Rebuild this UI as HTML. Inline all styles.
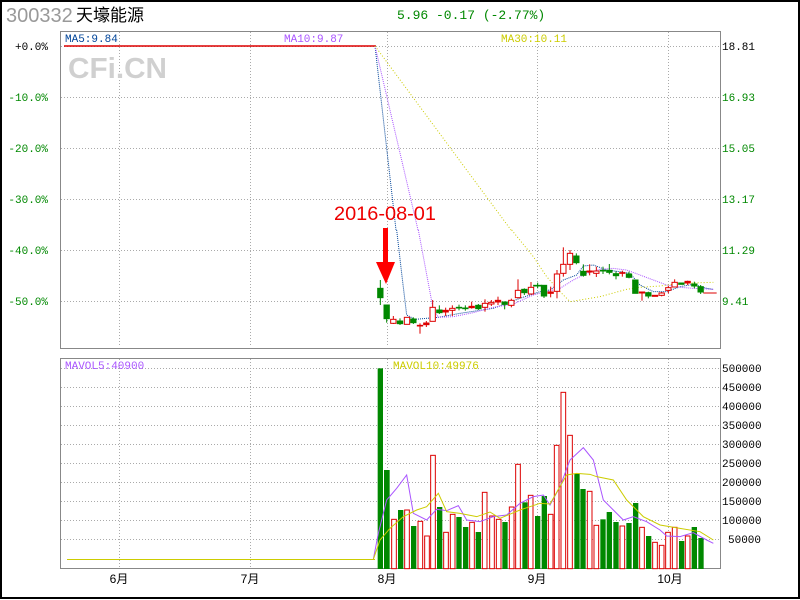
<!DOCTYPE html>
<html><head><meta charset="utf-8"><style>
html,body{margin:0;padding:0;background:#fff}
svg{display:block}
</style></head><body>
<svg width="800" height="600" viewBox="0 0 800 600" xmlns="http://www.w3.org/2000/svg" font-family="Liberation Mono, monospace">
<rect x="0" y="0" width="800" height="600" fill="#fff"/>
<rect x="1" y="1" width="798" height="597" fill="none" stroke="#000" stroke-width="2"/>
<text x="6" y="22" font-family="Liberation Sans, sans-serif" font-size="20" fill="#999">300332</text>
<text x="76" y="21" font-family="Liberation Sans, 'Noto Sans CJK SC', sans-serif" font-size="17" fill="#000">天壕能源</text>
<text x="397" y="19" font-size="13" fill="#008800">5.96 -0.17 (-2.77%)</text>
<g stroke="#aaa" stroke-width="1" stroke-dasharray="1,2">
<line x1="61" y1="46.5" x2="719" y2="46.5"/><line x1="61" y1="97.5" x2="719" y2="97.5"/><line x1="61" y1="148.5" x2="719" y2="148.5"/><line x1="61" y1="199.5" x2="719" y2="199.5"/><line x1="61" y1="250.5" x2="719" y2="250.5"/><line x1="61" y1="301.5" x2="719" y2="301.5"/>
<line x1="119.5" y1="32" x2="119.5" y2="347"/><line x1="250.5" y1="32" x2="250.5" y2="347"/><line x1="387.5" y1="32" x2="387.5" y2="347"/><line x1="537.5" y1="32" x2="537.5" y2="347"/><line x1="668.5" y1="32" x2="668.5" y2="347"/>
<line x1="61" y1="368.5" x2="719" y2="368.5"/><line x1="61" y1="387.5" x2="719" y2="387.5"/><line x1="61" y1="406.5" x2="719" y2="406.5"/><line x1="61" y1="425.5" x2="719" y2="425.5"/><line x1="61" y1="444.5" x2="719" y2="444.5"/><line x1="61" y1="463.5" x2="719" y2="463.5"/><line x1="61" y1="482.5" x2="719" y2="482.5"/><line x1="61" y1="501.5" x2="719" y2="501.5"/><line x1="61" y1="520.5" x2="719" y2="520.5"/><line x1="61" y1="539.5" x2="719" y2="539.5"/>
<line x1="119.5" y1="359" x2="119.5" y2="568"/><line x1="250.5" y1="359" x2="250.5" y2="568"/><line x1="387.5" y1="359" x2="387.5" y2="568"/><line x1="537.5" y1="359" x2="537.5" y2="568"/><line x1="668.5" y1="359" x2="668.5" y2="568"/>
</g>
<rect x="60.5" y="31.5" width="660" height="317" fill="none" stroke="#888" stroke-width="1"/>
<rect x="60.5" y="358.5" width="660" height="210" fill="none" stroke="#888" stroke-width="1"/>
<text x="68" y="78" font-family="Liberation Sans, sans-serif" font-weight="bold" font-size="29" fill="#d0d0d0" textLength="99" lengthAdjust="spacingAndGlyphs">CFi.CN</text>
<g font-size="11">
<text x="65" y="42" fill="#004499">MA5:9.84</text>
<text x="284" y="42" fill="#aa55ff">MA10:9.87</text>
<text x="501" y="42" fill="#cccc00">MA30:10.11</text>
<text x="65" y="369" fill="#aa55ff">MAVOL5:40900</text>
<text x="393" y="369" fill="#cccc00">MAVOL10:49976</text>
</g>
<g font-size="11" text-anchor="end">
<text x="48" y="50" fill="#000">+0.0%</text>
<text x="48" y="101" fill="#008800">-10.0%</text>
<text x="48" y="152" fill="#008800">-20.0%</text>
<text x="48" y="203" fill="#008800">-30.0%</text>
<text x="48" y="254" fill="#008800">-40.0%</text>
<text x="48" y="305" fill="#008800">-50.0%</text>
</g>
<g font-size="11">
<text x="722" y="50" fill="#000">18.81</text>
<text x="722" y="101" fill="#008800">16.93</text>
<text x="722" y="152" fill="#008800">15.05</text>
<text x="722" y="203" fill="#008800">13.17</text>
<text x="722" y="254" fill="#008800">11.29</text>
<text x="722" y="305" fill="#008800">9.41</text>
<text x="722" y="372">500000</text><text x="722" y="391">450000</text><text x="722" y="410">400000</text><text x="722" y="429">350000</text><text x="722" y="448">300000</text><text x="722" y="467">250000</text><text x="722" y="486">200000</text><text x="722" y="505">150000</text><text x="722" y="524">100000</text><text x="728" y="543">50000</text>
</g>
<g font-family="Liberation Sans, 'Noto Sans CJK SC', sans-serif" font-size="12" fill="#000" text-anchor="middle">
<text x="119" y="583">6月</text><text x="250" y="583">7月</text><text x="387" y="583">8月</text><text x="537" y="583">9月</text><text x="670" y="583">10月</text>
</g>
<line x1="64" y1="46" x2="376" y2="46" stroke="#dd0000" stroke-width="1.5"/>
<line x1="67" y1="559.5" x2="375" y2="559.5" stroke="#cccc00" stroke-width="1"/>
<line x1="375" y1="46" x2="396" y2="230" stroke="#004499" stroke-dasharray="1,1"/>
<line x1="375" y1="46" x2="418" y2="230" stroke="#aa55ff" stroke-dasharray="1,1"/>
<line x1="375" y1="46" x2="511" y2="230" stroke="#cccc00" stroke-dasharray="1,2"/>
<text x="334" y="220" font-family="Liberation Sans, sans-serif" font-size="19" fill="#ee0000" textLength="102" lengthAdjust="spacingAndGlyphs">2016-08-01</text>
<rect x="383" y="228" width="5" height="36" fill="#ff0000"/>
<polygon points="376,262 395,262 386,284" fill="#ff0000"/>
<g transform="translate(360,230) scale(0.33333)" stroke-width="3">
<g fill="none" stroke-dasharray="3,3" stroke-width="3">
<polyline stroke="#004499" points="110,0 125,130 140,255 165,268 235,262 300,250 400,235 480,205 540,185 570,180 610,150 650,135 670,108 700,105 740,120 780,125 810,130 840,165 880,185 920,185 960,170 1000,163 1040,175 1060,178"/>
<polyline stroke="#aa55ff" points="175,0 220,240 235,262 280,260 340,248 400,232 460,222 520,195 560,185 600,175 640,150 680,130 720,118 760,115 800,120 840,135 880,150 920,165 960,172 1000,175 1060,178"/>
<polyline stroke="#cccc00" stroke-dasharray="3,6" points="455,0 520,80 560,140 600,185 630,215 660,210 720,200 800,178 840,172 900,168 960,160 1060,157"/>
</g>
<line x1="1030" y1="189" x2="1070" y2="189" stroke="#dd0000"/>
<g stroke="#008800" fill="#008800">
<line x1="61" y1="150" x2="61" y2="225"/><rect x="53" y="175" width="16" height="28"/>
<line x1="80" y1="225" x2="80" y2="278"/><rect x="72" y="225" width="16" height="41"/>
<line x1="120" y1="265" x2="120" y2="285"/><rect x="112" y="273" width="16" height="8"/>
<line x1="160" y1="262" x2="160" y2="282"/><rect x="152" y="267" width="16" height="11"/>
<line x1="238" y1="226" x2="238" y2="252"/><rect x="230" y="240" width="16" height="8"/>
<line x1="297" y1="224" x2="297" y2="241"/><rect x="289" y="232" width="16" height="2"/>
<line x1="316" y1="226" x2="316" y2="242"/><rect x="308" y="234" width="16" height="2"/>
<line x1="355" y1="222" x2="355" y2="240"/><rect x="347" y="226" width="16" height="10"/>
<line x1="434" y1="214" x2="434" y2="238"/><rect x="426" y="216" width="16" height="7"/>
<line x1="493" y1="175" x2="493" y2="195"/><rect x="485" y="178" width="16" height="10"/>
<line x1="533" y1="158" x2="533" y2="175"/><rect x="521" y="166" width="24" height="2"/>
<line x1="552" y1="165" x2="552" y2="204"/><rect x="544" y="166" width="16" height="32"/>
<line x1="649" y1="70" x2="649" y2="103"/><rect x="641" y="78" width="16" height="20"/>
<line x1="670" y1="103" x2="670" y2="140"/><rect x="662" y="124" width="16" height="12"/>
<line x1="729" y1="110" x2="729" y2="132"/><rect x="721" y="121" width="16" height="2"/>
<line x1="748" y1="102" x2="748" y2="133"/><rect x="740" y="121" width="16" height="6"/>
<line x1="768" y1="124" x2="768" y2="148"/><rect x="760" y="131" width="16" height="6"/>
<line x1="807" y1="125" x2="807" y2="145"/><rect x="799" y="132" width="16" height="10"/>
<rect x="818" y="150" width="16" height="40"/>
<line x1="865" y1="185" x2="865" y2="205"/><rect x="857" y="188" width="16" height="10"/>
<rect x="956" y="159" width="16" height="4"/>
<line x1="1003" y1="155" x2="1003" y2="175"/><rect x="995" y="162" width="16" height="6"/>
<line x1="1022" y1="165" x2="1022" y2="192"/><rect x="1014" y="170" width="16" height="16"/>
</g>
<g stroke="#dd0000" fill="#fff">
<line x1="100" y1="258" x2="100" y2="282"/><rect x="92" y="268" width="16" height="12"/>
<rect x="133" y="262" width="16" height="21"/>
<line x1="180" y1="280" x2="180" y2="311"/><rect x="172" y="286" width="16" height="2" fill="#dd0000"/>
<line x1="199" y1="273" x2="199" y2="291"/><rect x="191" y="279" width="16" height="5" fill="#dd0000"/>
<line x1="218" y1="210" x2="218" y2="232"/><rect x="210" y="232" width="16" height="42"/>
<line x1="257" y1="233" x2="257" y2="258"/><rect x="249" y="241" width="16" height="5" fill="#dd0000"/>
<line x1="277" y1="226" x2="277" y2="258"/><rect x="269" y="235" width="16" height="6"/>
<line x1="335" y1="215" x2="335" y2="236"/><rect x="327" y="229" width="16" height="4" fill="#dd0000"/>
<line x1="375" y1="208" x2="375" y2="245"/><rect x="367" y="220" width="16" height="12"/>
<line x1="394" y1="210" x2="394" y2="228"/><rect x="386" y="217" width="16" height="5"/>
<line x1="414" y1="200" x2="414" y2="225"/><rect x="406" y="211" width="16" height="5" fill="#dd0000"/>
<line x1="454" y1="206" x2="454" y2="232"/><rect x="446" y="211" width="16" height="15"/>
<line x1="474" y1="148" x2="474" y2="205"/><rect x="466" y="181" width="16" height="22"/>
<line x1="513" y1="156" x2="513" y2="194"/><rect x="505" y="172" width="16" height="20"/>
<line x1="572" y1="170" x2="572" y2="202"/><rect x="564" y="186" width="16" height="4" fill="#dd0000"/>
<line x1="591" y1="120" x2="591" y2="205"/><rect x="583" y="132" width="16" height="52"/>
<line x1="610" y1="52" x2="610" y2="140"/><rect x="602" y="103" width="16" height="27"/>
<line x1="630" y1="60" x2="630" y2="120"/><rect x="622" y="70" width="16" height="33"/>
<line x1="689" y1="103" x2="689" y2="136"/><rect x="681" y="123" width="16" height="3" fill="#dd0000"/>
<line x1="709" y1="110" x2="709" y2="141"/><rect x="701" y="123" width="16" height="7"/>
<line x1="787" y1="122" x2="787" y2="140"/><rect x="779" y="128" width="16" height="2" fill="#dd0000"/>
<line x1="846" y1="186" x2="846" y2="212"/><rect x="838" y="186" width="16" height="3" fill="#dd0000"/>
<rect x="877" y="196" width="16" height="3"/>
<line x1="905" y1="186" x2="905" y2="199"/><rect x="897" y="189" width="16" height="7"/>
<line x1="925" y1="168" x2="925" y2="190"/><rect x="917" y="173" width="16" height="8"/>
<line x1="944" y1="148" x2="944" y2="172"/><rect x="936" y="157" width="16" height="14"/>
<line x1="983" y1="152" x2="983" y2="165"/><rect x="975" y="154" width="16" height="5" fill="#dd0000"/>
</g>
</g>
<g transform="translate(360,360) scale(0.33333)" stroke-width="3">
<g fill="#008800">
<rect x="53" y="25" width="16" height="602"/>
<rect x="72" y="330" width="17" height="297"/>
<rect x="114" y="450" width="16" height="177"/>
<rect x="153" y="498" width="16" height="129"/>
<rect x="231" y="441" width="16" height="186"/>
<rect x="289" y="471" width="16" height="156"/>
<rect x="309" y="501" width="16" height="126"/>
<rect x="347" y="516" width="16" height="111"/>
<rect x="427" y="486" width="16" height="141"/>
<rect x="487" y="427" width="16" height="200"/>
<rect x="525" y="468" width="16" height="159"/>
<rect x="545" y="408" width="16" height="219"/>
<rect x="643" y="342" width="16" height="285"/>
<rect x="661" y="387" width="16" height="240"/>
<rect x="721" y="478" width="16" height="149"/>
<rect x="740" y="456" width="16" height="171"/>
<rect x="760" y="486" width="16" height="141"/>
<rect x="799" y="489" width="16" height="138"/>
<rect x="819" y="429" width="16" height="198"/>
<rect x="858" y="528" width="16" height="99"/>
<rect x="957" y="543" width="16" height="84"/>
<rect x="995" y="501" width="16" height="126"/>
<rect x="1015" y="534" width="16" height="93"/>
</g>
<g fill="#fff" stroke="#dd0000">
<rect x="95" y="478" width="14" height="148"/>
<rect x="134" y="450" width="14" height="176"/>
<rect x="174" y="484" width="14" height="142"/>
<rect x="194" y="528" width="14" height="98"/>
<rect x="212" y="286" width="14" height="340"/>
<rect x="251" y="517" width="14" height="109"/>
<rect x="271" y="463" width="14" height="163"/>
<rect x="329" y="487" width="14" height="139"/>
<rect x="367" y="397" width="14" height="229"/>
<rect x="389" y="468" width="14" height="158"/>
<rect x="409" y="478" width="14" height="148"/>
<rect x="448" y="441" width="14" height="185"/>
<rect x="467" y="313" width="14" height="313"/>
<rect x="505" y="406" width="14" height="220"/>
<rect x="565" y="463" width="14" height="163"/>
<rect x="583" y="256" width="14" height="370"/>
<rect x="603" y="97" width="14" height="529"/>
<rect x="623" y="226" width="14" height="400"/>
<rect x="682" y="394" width="14" height="232"/>
<rect x="702" y="496" width="14" height="130"/>
<rect x="780" y="498" width="14" height="128"/>
<rect x="839" y="502" width="14" height="124"/>
<rect x="878" y="547" width="14" height="79"/>
<rect x="898" y="556" width="14" height="70"/>
<rect x="917" y="517" width="14" height="109"/>
<rect x="937" y="502" width="14" height="124"/>
<rect x="976" y="528" width="14" height="98"/>
</g>
<polyline fill="none" stroke="#aa55ff" points="40,598 55,520 80,420 110,385 140,345 160,460 200,480 230,448 260,452 295,437 320,480 360,485 400,470 440,465 480,430 520,410 550,405 570,435 600,380 630,300 670,263 700,300 730,420 790,480 820,470 860,485 900,510 920,528 960,530 1000,518 1040,540 1060,550"/>
<polyline fill="none" stroke="#cccc00" points="40,598 60,540 90,505 130,470 170,450 200,440 235,400 260,455 300,460 350,470 390,456 420,475 480,450 540,430 570,432 620,345 650,340 690,343 710,350 760,360 800,420 850,470 900,495 960,505 1020,515 1060,540"/>
</g>
</svg>
</body></html>
